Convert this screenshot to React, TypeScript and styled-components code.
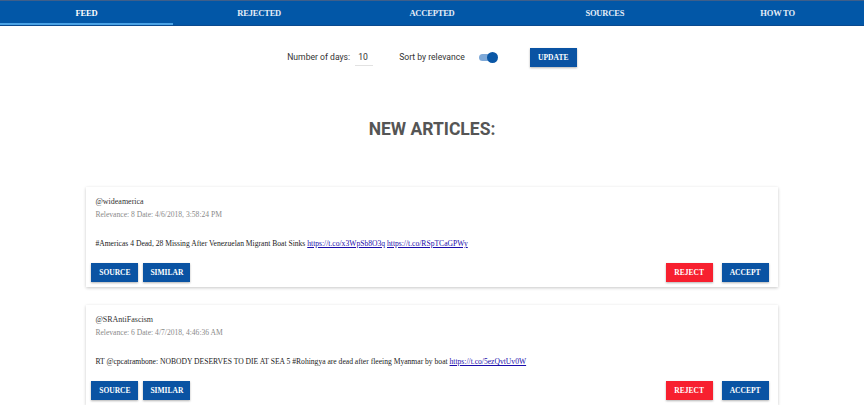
import React from "react";
import styled, { createGlobalStyle } from "styled-components";

const GlobalStyle = createGlobalStyle`
  body {
    margin: 0;
    background: #ffffff;
    font-family: "Liberation Serif", serif;
  }
`;

const Nav = styled.div`
  width: 100%;
  height: 26px;
  background-color: #0257a7;
  border-top: 1px solid #3f5f8a;
  border-bottom: 1px solid #0a4a8f;
  box-sizing: border-box;
  display: flex;
`;

const Tab = styled.div<{ active?: boolean }>`
  flex: 1;
  display: flex;
  align-items: center;
  justify-content: center;
  color: ${(p) => (p.active ? "#ffffff" : "#e6eef8")};
  font-family: "Liberation Serif", serif;
  font-weight: bold;
  font-size: 8.5px;
  letter-spacing: -0.2px;
  text-transform: uppercase;
  box-sizing: border-box;
  border-bottom: 2px solid ${(p) => (p.active ? "#4ba3e6" : "transparent")};
  padding-top: 2px;
`;

const Controls = styled.div`
  display: flex;
  align-items: center;
  justify-content: center;
  margin-top: 21px;
  height: 20px;
  font-family: Roboto, sans-serif;
  font-size: 8.6px;
  color: #333;
`;

const Label = styled.span`
  margin-right: 5px;
`;

const DaysInput = styled.div`
  width: 15px;
  padding-left: 3px;
  border-bottom: 1px solid #e2e2e2;
  padding-bottom: 3px;
  margin-top: 3px;
  margin-right: 26px;
`;

const Switch = styled.div`
  position: relative;
  width: 16px;
  height: 7px;
  border-radius: 4px;
  background: #7fa9d8;
  margin-left: 14px;
  margin-right: 35px;
  &::after {
    content: "";
    position: absolute;
    right: -3px;
    top: -2px;
    width: 11px;
    height: 11px;
    border-radius: 50%;
    background: #0a57a6;
  }
`;

const Button = styled.button<{ color?: string; gapAfter?: number }>`
  height: 19px;
  min-width: 47px;
  padding: 0 6px;
  margin-right: ${(p) => p.gapAfter ?? 0}px;
  border: none;
  background-color: ${(p) => p.color || "#0a53a3"};
  color: white;
  font-family: "Liberation Serif", serif;
  font-weight: bold;
  font-size: 7.5px;
  text-transform: uppercase;
  box-shadow: 0 1px 2px rgba(0, 0, 0, 0.3);
  cursor: pointer;
`;

const Title = styled.h1`
  margin: 51px 0 0;
  text-align: center;
  font-family: Roboto, sans-serif;
  font-weight: bold;
  font-size: 17.5px;
  color: #555;
  line-height: 22px;
`;

const Cards = styled.div`
  margin-top: 47px;
  display: flex;
  flex-direction: column;
  gap: 18px;
`;

const Card = styled.div`
  width: 80%;
  margin: 0 auto;
  background: white;
  box-shadow: 0 1px 3px rgba(0, 0, 0, 0.22);
  padding: 8px 9px 5px 5px;
  box-sizing: border-box;
`;

const User = styled.div`
  padding-left: 4px;
  font-size: 8px;
  color: #333;
  line-height: 13px;
`;

const Meta = styled.div`
  padding-left: 4px;
  font-size: 7.6px;
  color: #8a8a8a;
  line-height: 13px;
`;

const Body = styled.div`
  padding-left: 4px;
  margin-top: 17px;
  font-size: 7.6px;
  color: #222;
  line-height: 12px;
  a {
    color: #1a0dab;
    text-decoration: underline;
  }
`;

const Actions = styled.div`
  display: flex;
  gap: 5px;
  margin-top: 13px;
`;

const Spacer = styled.div`
  flex: 1;
`;

type Article = {
  user: string;
  relevance: number;
  date: string;
  text: string;
  links: string[];
};

const articles: Article[] = [
  {
    user: "@wideamerica",
    relevance: 8,
    date: "4/6/2018, 3:58:24 PM",
    text: "#Americas 4 Dead, 28 Missing After Venezuelan Migrant Boat Sinks",
    links: ["https://t.co/x3WpSb8O3q", "https://t.co/RSpTCaGPWy"],
  },
  {
    user: "@SRAntiFascism",
    relevance: 6,
    date: "4/7/2018, 4:46:36 AM",
    text: "RT @cpcatrambone: NOBODY DESERVES TO DIE AT SEA 5 #Rohingya are dead after fleeing Myanmar by boat",
    links: ["https://t.co/5ezQvtUv0W"],
  },
];

const tabs = ["Feed", "Rejected", "Accepted", "Sources", "How to"];

export default function App() {
  return (
    <>
      <GlobalStyle />
      <Nav>
        {tabs.map((t, i) => (
          <Tab key={t} active={i === 0}>
            {t}
          </Tab>
        ))}
      </Nav>
      <Controls>
        <Label>Number of days:</Label>
        <DaysInput>10</DaysInput>
        <span>Sort by relevance</span>
        <Switch />
        <Button>Update</Button>
      </Controls>
      <Title>NEW ARTICLES:</Title>
      <Cards>
        {articles.map((a) => (
          <Card key={a.user}>
            <User>{a.user}</User>
            <Meta>
              Relevance: {a.relevance} Date: {a.date}
            </Meta>
            <Body>
              {a.text}{" "}
              {a.links.map((l) => (
                <React.Fragment key={l}>
                  <a href="#">{l}</a>{" "}
                </React.Fragment>
              ))}
            </Body>
            <Actions>
              <Button>Source</Button>
              <Button>Similar</Button>
              <Spacer />
              <Button color="#f7202f" gapAfter={4}>
                Reject
              </Button>
              <Button>Accept</Button>
            </Actions>
          </Card>
        ))}
      </Cards>
    </>
  );
}
